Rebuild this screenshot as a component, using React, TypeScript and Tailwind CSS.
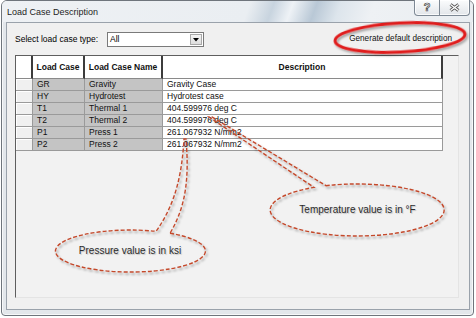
import React from "react";

// Load case description dialog (Win7 style) with annotation overlay
const rows = [
  { id: "GR", name: "Gravity", desc: "Gravity Case" },
  { id: "HY", name: "Hydrotest", desc: "Hydrotest case" },
  { id: "T1", name: "Thermal 1", desc: "404.599976 deg C" },
  { id: "T2", name: "Thermal 2", desc: "404.599976 deg C" },
  { id: "P1", name: "Press 1", desc: "261.067932 N/mm2" },
  { id: "P2", name: "Press 2", desc: "261.067932 N/mm2" },
];

const TitleButtons = () => (
  <div className="ml-auto mr-[3px] -mt-[1px] flex h-[16px] rounded-b-[4px] border border-t-0 border-[#7d8894] bg-[linear-gradient(#fbfcfd,#e2e6ea)] shadow-[inset_0_0_0_1px_rgba(255,255,255,0.8)]">
    <div className="flex w-[25px] items-center justify-center border-r border-[#7d8894] text-[11px] font-bold leading-none text-[#fafafa] [-webkit-text-stroke:0.7px_#4a4a4a]">
      ?
    </div>
    <div className="flex w-[29px] items-center justify-center">
      <svg width="11" height="9" viewBox="0 0 11 9">
        <path d="M1.5 1.5 L9.5 7.5 M9.5 1.5 L1.5 7.5" stroke="#555" strokeWidth="3" />
        <path d="M1.5 1.5 L9.5 7.5 M9.5 1.5 L1.5 7.5" stroke="#fff" strokeWidth="1.3" />
      </svg>
    </div>
  </div>
);

const Overlay = () => (
  <svg
    className="pointer-events-none absolute left-0 top-0"
    width="476"
    height="318"
    viewBox="0 0 476 318"
  >
    <defs>
      <filter id="sh" x="-10%" y="-10%" width="130%" height="140%">
        <feDropShadow dx="1.5" dy="2" stdDeviation="1" floodColor="#000" floodOpacity="0.35" />
      </filter>
    </defs>
    {/* red highlight round the button */}
    <ellipse
      cx="400"
      cy="37.5"
      rx="65"
      ry="14.5"
      transform="rotate(-3 400 37.5)"
      fill="none"
      stroke="#e01e1e"
      strokeWidth="3"
      filter="url(#sh)"
    />
    {/* pressure callout */}
    <path
      d="M170 233.2 A75 21 0 1 1 156 231.3 C175 205 182 175 184 139 L186 139 C189 175 187 205 170 233.2 Z"
      fill="none"
      stroke="#c4492c"
      strokeWidth="1.4"
      strokeDasharray="4 2"
      filter="url(#sh)"
    />
    {/* temperature callout */}
    <path
      d="M326 185.7 A87 26 0 1 1 314 187.4 L209 117 L212 117 Z"
      fill="none"
      stroke="#c4492c"
      strokeWidth="1.4"
      strokeDasharray="4 2"
      filter="url(#sh)"
    />
  </svg>
);

export default function App() {
  return (
    <div className="relative h-[318px] w-[476px] bg-white font-['Liberation_Sans',Arial,sans-serif] text-black">
      {/* Window frame */}
      <div className="ml-[1px] flex h-[316px] w-[473px] flex-col rounded-t-[6px] rounded-b-[4px] border border-[#6f757c] bg-[#e3e7eb] shadow-[inset_0_0_0_1px_rgba(255,255,255,0.7)]">
        {/* Title bar */}
        <div className="flex h-[21px] items-start rounded-t-[5px] bg-[linear-gradient(110deg,#eef1f4_0%,#eaeef2_52%,#c8d4df_57%,#eef2f6_61%,#b9c8d6_66%,#dde5ec_71%,#eef1f4_78%,#e9edf1_100%)]">
          <span className="pl-[5px] text-[9px] leading-[23px] text-[#1e1e1e]">
            Load Case Description
          </span>
          <TitleButtons />
        </div>

        {/* Client area */}
        <div className="mb-[5px] ml-[4px] mr-[3px] flex h-[288px] flex-col border border-[#9aa2ab] bg-[#f0f0f0]">
          {/* Top row */}
          <div className="flex h-[15px] items-center pl-[8px] pt-0 mt-[9px]">
            <span className="w-[92px] text-[8.5px] leading-none">Select load case type:</span>
            <div className="flex h-[15px] w-[97px] items-center border border-[#7a7a7a] bg-white">
              <span className="flex-1 pl-[2px] text-[8.5px] leading-none">All</span>
              <div className="mr-[1px] flex h-[11px] w-[12px] items-center justify-center border border-[#a9a9a9] bg-[linear-gradient(#f4f4f4,#dedede)]">
                <svg width="6" height="4" viewBox="0 0 6 4">
                  <path d="M0 0 L6 0 L3 3.5 Z" fill="#000" />
                </svg>
              </div>
            </div>
            <span className="ml-auto mr-[17px] text-[8.2px] leading-none text-[#111]">
              Generate default description
            </span>
          </div>

          {/* Grid panel */}
          <div className="ml-[8px] mt-[8px] h-[243px] w-[444px] border-l border-t border-r border-b border-l-[#5e5e5e] border-t-[#5e5e5e] border-r-[#e4e4e4] border-b-[#e4e4e4] bg-[#f2f2f2]">
            <div className="flex h-[23px] text-[8.5px] font-bold text-[#111]">
              <div className="w-[17px] border-b border-r-2 border-b-[#8a8a8a] border-r-[#3c3c3c] bg-white" />
              <div className="flex w-[52px] items-center justify-center border-b border-r-2 border-b-[#8a8a8a] border-r-[#3c3c3c] bg-white">
                Load Case
              </div>
              <div className="flex w-[78px] items-center justify-center border-b border-r-2 border-b-[#8a8a8a] border-r-[#3c3c3c] bg-white">
                Load Case Name
              </div>
              <div className="flex w-[280px] items-center justify-center border-b border-r-2 border-b-[#8a8a8a] border-r-[#3c3c3c] bg-white">
                Description
              </div>
            </div>
            {rows.map((r) => (
              <div key={r.id} className="flex h-[12px] text-[8.5px] leading-[11px] text-[#111]">
                <div className="w-[17px] border-b border-r border-[#9a9a9a] bg-[#f0f0f0] shadow-[inset_1px_1px_0_#fff]" />
                <div className="w-[52px] border-b border-r border-[#9a9a9a] bg-[#c4c4c4] pl-[4px]">
                  {r.id}
                </div>
                <div className="w-[78px] border-b border-r border-[#9a9a9a] bg-[#c4c4c4] pl-[4px]">
                  {r.name}
                </div>
                <div className="w-[280px] border-b border-r border-[#9a9a9a] bg-white pl-[4px]">
                  {r.desc}
                </div>
              </div>
            ))}
          </div>
        </div>
      </div>

      <Overlay />

      {/* Callout texts */}
      <div className="absolute left-[55px] top-[244px] w-[150px] text-center text-[10px] leading-[14px] text-[#2b2b2b] [text-shadow:1px_1px_1px_rgba(0,0,0,0.2)]">
        Pressure value is in ksi
      </div>
      <div className="absolute left-[270px] top-[203px] w-[175px] text-center text-[10px] leading-[14px] text-[#2b2b2b] [text-shadow:1px_1px_1px_rgba(0,0,0,0.2)]">
        Temperature value is in °F
      </div>
    </div>
  );
}
